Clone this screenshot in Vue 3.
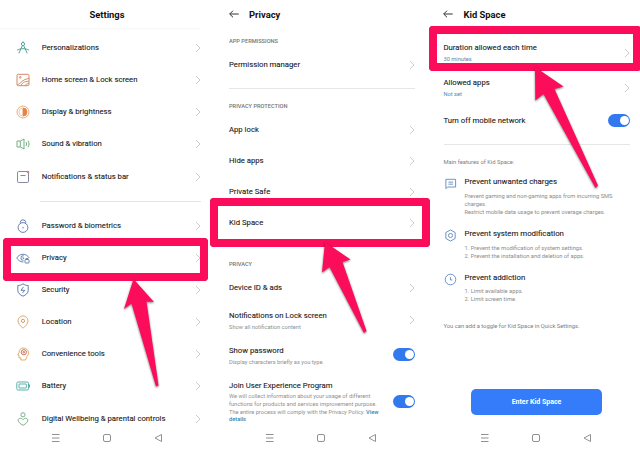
<script setup>
const settings = [
  { icon: 'compass', text: 'Personalizations' },
  { icon: 'home', text: 'Home screen & Lock screen' },
  { icon: 'display', text: 'Display & brightness' },
  { icon: 'sound', text: 'Sound & vibration' },
  { icon: 'notify', text: 'Notifications & status bar' },
  { divider: true },
  { icon: 'lock', text: 'Password & biometrics' },
  { icon: 'eye', text: 'Privacy' },
  { icon: 'shield', text: 'Security' },
  { icon: 'pin', text: 'Location' },
  { icon: 'head', text: 'Convenience tools' },
  { icon: 'battery', text: 'Battery' },
  { icon: 'heart', text: 'Digital Wellbeing & parental controls' },
]
const protection = ['App lock', 'Hide apps', 'Private Safe', 'Kid Space']
const features = [
  {
    icon: 'chat',
    title: 'Prevent unwanted charges',
    lines: ['Prevent gaming and non-gaming apps from incurring SMS', 'charges.', 'Restrict mobile data usage to prevent overage charges.'],
  },
  {
    icon: 'hex',
    title: 'Prevent system modification',
    lines: ['1. Prevent the modification of system settings.', '2. Prevent the installation and deletion of apps.'],
  },
  { icon: 'clock', title: 'Prevent addiction', lines: ['1. Limit available apps.', '2. Limit screen time.'] },
]
const icons = {
  compass: '<g stroke="#3f9c8d"><circle cx="7" cy="3" r="1.6"/><path d="M6.3 4.6 2.8 12.4M7.7 4.6l3.5 7.8M1 9.2c3.5-2 8.500-2 12 0M7 .4v1"/></g>',
  home: '<g stroke="#cf7c54"><rect x="1" y="1.300" width="12" height="11.400" rx="1.200"/><path d="M1.500 11.500C5 11 5.500 6.500 12.800 5.500M5 12.500c1-2.500 3-4 7.800-4.300M9 12.500c.7-1.200 2-1.800 3.800-1.900"/><circle cx="4.200" cy="4.400" r=".8"/></g>',
  display: '<circle cx="7" cy="7" r="6" stroke="#e7a765"/><path d="M7 3a4 4 0 0 1 0 8z" fill="#e5854e" stroke="#e5854e"/><path d="M7 3a4 4 0 0 0 0 8" stroke="#f0c495"/>',
  sound: '<g stroke="#63a774"><path d="M1 4h3.300v6H1zM4.300 4 8 2v10L4.300 10M10 5c.8 1 .8 3 0 4M12 3.700c1.400 2 1.400 4.600 0 6.600"/></g>',
  notify: '<rect x="1.500" y="1.500" width="11" height="11" rx="1.300" stroke="#747e99"/><path d="M4.500 5.500h5" stroke="#747e99"/><circle cx="12" cy="2" r="1.300" fill="#d98080" stroke="none"/>',
  lock: '<g stroke="#5674aa"><circle cx="7" cy="8.500" r="4.900"/><path d="M4.300 4.600V3.500a2.700 2.700 0 0 1 5.400 0v1.100M7 7.800v1.700"/></g>',
  eye: '<g stroke="#5878ad"><path d="M7.500 11C4 11 1.800 8.800.8 7c2.700-5 9.700-5 12.400 0M7.800 4.800a2.300 2.300 0 1 0-.3 4.500M7 6.200v1.200h1.200"/><rect x="9" y="8.500" width="4" height="3.500" rx=".7"/><path d="M10 8.500v-1h2v1"/></g>',
  shield: '<g stroke="#50719f"><path d="M7 .8c1.700 1.200 3.300 1.700 5.200 1.700v5c0 2.700-2.500 4.500-5.200 5.700C4.300 12 1.800 10.200 1.800 7.500v-5C3.700 2.500 5.300 2 7 .8z"/><path d="M7.500 3.800 5 7.300h3.800L6.400 10" /></g>',
  pin: '<g stroke="#d5a66b"><path d="M7 13.200C4.500 11 2 8.800 2 5.900a5 5 0 0 1 10 0c0 2.900-2.500 5.100-5 7.300z"/><circle cx="7" cy="5.900" r="1.600" stroke="#cc946f"/></g>',
  head: '<path d="M4.800 13v-2.200H3V8.500L1.700 8 3 5.600C3 2.500 5 1 7.500 1s5 2 5 4.800c0 2-1.500 3-1.800 4.400L9.500 13z" stroke="#dea557"/><circle cx="7.800" cy="5.200" r="2.600" stroke="#be6350"/><circle cx="7.800" cy="5.200" r=".8" stroke="#be6350"/>',
  battery: '<g stroke="#47aaa2"><rect x=".8" y="3" width="11.700" height="8" rx="1.300"/><rect x="3" y="5" width="7.300" height="4" rx=".4"/><path d="M13.500 5.500v3"/></g>',
  heart: '<g stroke="#6ca77e"><circle cx="7" cy="2.800" r="2.100"/><path d="M7 13.300C4 11.700 2.200 10 2.200 8.200c0-2.200 3.200-2.700 4.800-.5 1.600-2.200 4.800-1.700 4.800.5 0 1.800-1.800 3.500-4.800 5.100z"/></g>',
  chat: '<g stroke="#4f7fba"><path d="M2 12.500v-10h10.500v8.300H4z"/><path d="M4.800 5.500h5M4.800 7.700h5"/></g>',
  hex: '<g stroke="#4f7fba"><path d="M7 1 12 3.800v6.400L7 13l-5-2.800V3.800z"/><circle cx="7" cy="7" r="2.200"/></g>',
  clock: '<g stroke="#4f7fba"><circle cx="7" cy="7" r="5.700"/><path d="M7 4.500v3h2"/></g>',
}
</script>

<template>
  <main class="board">
    <section class="phone first">
      <header class="head center">Settings</header>
      <div class="list">
        <template v-for="(s, i) in settings" :key="i">
          <div v-if="s.divider" class="gap"><i></i></div>
          <div v-else class="row">
            <svg class="icon" viewBox="0 0 14 14" v-html="icons[s.icon]"></svg>
            <span class="label">{{ s.text }}</span>
            <svg class="chev" viewBox="0 0 6 10"><path d="M1 1l4 4-4 4" /></svg>
          </div>
        </template>
      </div>
    </section>

    <section class="phone second">
      <header class="head">
        <svg class="back" viewBox="0 0 10 8"><path d="M9.700 4H.8M4 .7.700 4 4 7.300" /></svg>Privacy
      </header>
      <h3 class="cap cap-a">APP PERMISSIONS</h3>
      <div class="row perm">
        <span class="label">Permission manager</span>
        <svg class="chev" viewBox="0 0 6 10"><path d="M1 1l4 4-4 4" /></svg>
      </div>
      <hr />
      <h3 class="cap cap-b">PRIVACY PROTECTION</h3>
      <div v-for="p in protection" :key="p" class="row prot">
        <span class="label">{{ p }}</span>
        <svg class="chev" viewBox="0 0 6 10"><path d="M1 1l4 4-4 4" /></svg>
      </div>
      <h3 class="cap cap-c">PRIVACY</h3>
      <div class="row dev">
        <span class="label">Device ID &amp; ads</span>
        <svg class="chev" viewBox="0 0 6 10"><path d="M1 1l4 4-4 4" /></svg>
      </div>
      <div class="row two">
        <div class="stack"><span class="label">Notifications on Lock screen</span><small>Show all notification content</small></div>
        <svg class="chev" viewBox="0 0 6 10"><path d="M1 1l4 4-4 4" /></svg>
      </div>
      <div class="row two">
        <div class="stack"><span class="label">Show password</span><small>Display characters briefly as you type.</small></div>
        <span class="toggle"></span>
      </div>
      <div class="row join">
        <div class="stack">
          <span class="label">Join User Experience Program</span>
          <small>We will collect information about your usage of different<br />functions for products and services improvement purpose.<br />The entire process will comply with the Privacy Policy. <b>View<br />details</b></small>
        </div>
        <span class="toggle"></span>
      </div>
    </section>

    <section class="phone third">
      <header class="head">
        <svg class="back" viewBox="0 0 10 8"><path d="M9.700 4H.8M4 .7.700 4 4 7.300" /></svg>Kid Space
      </header>
      <div class="row opt">
        <div class="stack"><span class="label">Duration allowed each time</span><small class="blue">30 minutes</small></div>
        <svg class="chev" viewBox="0 0 6 10"><path d="M1 1l4 4-4 4" /></svg>
      </div>
      <div class="row opt">
        <div class="stack"><span class="label">Allowed apps</span><small class="blue">Not set</small></div>
        <svg class="chev" viewBox="0 0 6 10"><path d="M1 1l4 4-4 4" /></svg>
      </div>
      <div class="row net">
        <span class="label">Turn off mobile network</span>
        <span class="toggle"></span>
      </div>
      <hr />
      <p class="note intro">Main features of Kid Space:</p>
      <article v-for="f in features" :key="f.icon" class="feature">
        <svg class="icon" viewBox="0 0 14 14" v-html="icons[f.icon]"></svg>
        <div>
          <h4>{{ f.title }}</h4>
          <p v-for="l in f.lines" :key="l">{{ l }}</p>
        </div>
      </article>
      <p class="note tip">You can add a toggle for Kid Space in Quick Settings.</p>
      <button class="enter">Enter Kid Space</button>
    </section>

    <nav v-for="n in 3" :key="n" class="nav">
      <svg viewBox="0 0 112 10">
        <path d="M1 1.500h7.500M1 5h7.500M1 8.500h7.500" />
        <rect x="52.500" y="1.500" width="7" height="7" rx="1.500" />
        <path d="M110.500 1.500v7L104 5z" />
      </svg>
    </nav>

    <svg class="marks" viewBox="0 0 640 451">
      <g class="frames">
        <rect x="7" y="242" width="197" height="35" />
        <rect x="214" y="202" width="212" height="41" />
        <rect x="433" y="30" width="204" height="37" />
      </g>
      <g class="arrows">
        <path d="M133.500 279 154 302l-7.500-.5L158.500 385.500l-2.500 1L131.500 303.500 124 309z" />
        <path d="M325 242 350.500 259.500l-8 2.500L366.500 331l-2.500 2L329.500 267 322 272.500z" />
        <path d="M535 67 563.500 86.500l-9 2.500L598 185.500l-2.500 2.500L543.500 94 535.300 100.500z" />
      </g>
    </svg>
  </main>
</template>

<style>
body { margin: 0; background: #fff; }
</style>

<style scoped>
* { box-sizing: border-box; }
.board {
  position: relative;
  display: grid;
  grid-template-columns: 210px 215px 215px;
  grid-template-rows: 426px 25px;
  width: 640px;
  height: 451px;
  overflow: hidden;
  background: #fff;
  color: #1c1c1c;
  font-family: Roboto, "Liberation Sans", sans-serif;
}
.phone { display: flex; flex-direction: column; min-width: 0; height: 426px; }
.first { padding-right: 9px; }
.second { padding: 0 10px 0 19px; }
.third { padding: 0 10px 0 18.500px; }
.head {
  display: flex;
  flex: none;
  align-items: center;
  height: 28px;
  font-size: 9.400px;
  font-weight: 700;
  color: #111;
}
.center { justify-content: center; height: 29px; padding-left: 13px; border-bottom: 1px solid #f7f7f7; }
.back { width: 10px; height: 8px; margin: 0 10.500px 0 -.5px; fill: none; stroke: #333; stroke-width: 1; }
.list { padding: 2.900px 0 0 16px; }
.row { display: flex; flex: none; align-items: center; justify-content: space-between; }
.list .row { height: 32.150px; }
.icon { flex: none; width: 14px; height: 14px; fill: none; stroke-width: .9; }
.list .icon { margin-right: 11.700px; }
.list .label { flex: 1; }
.label { font-size: 7.730px; line-height: 10px; font-weight: 400; white-space: nowrap; color: #1c1c1c; -webkit-text-stroke: .1px #1c1c1c; }
.chev { flex: none; width: 6px; height: 10px; fill: none; stroke: #c6c6c6; stroke-width: .9; }
.gap { display: flex; align-items: center; height: 17px; padding-left: 24px; }
.gap i { flex: 1; height: 1px; background: #e4e4e4; }
hr { flex: none; width: 100%; height: 1px; margin: 0; border: 0; background: #e6e6e6; }
.cap { flex: none; margin: 0; font-size: 5.650px; font-weight: 500; line-height: 10px; color: #757575; }
.cap-a { height: 21px; padding-top: 8px; }
.perm { height: 32px; }
.second hr { margin-top: 7px; }
.cap-b { height: 25.300px; padding-top: 12px; }
.prot { height: 31.100px; }
.cap-c { height: 34.500px; padding-top: 20px; }
.dev { height: 29px; }
.stack { display: flex; flex-direction: column; }
small { display: block; font-size: 5.700px; line-height: 7.600px; color: #8f8f8f; white-space: nowrap; }
small b { font-weight: 500; color: #3586b4; }
small.blue { color: #5586b5; }
.two { height: 35px; }
.two small { margin-top: 2.500px; }
.two .stack { padding-top: 3px; }
.join { height: 48px; margin-top: 5px; }
.join .stack { padding-top: 3px; }
.join small { margin-top: 2px; }
.toggle {
  display: flex;
  flex: none;
  justify-content: flex-end;
  align-items: center;
  width: 22px;
  height: 13px;
  padding-right: 1.500px;
  border-radius: 7px;
  background: #3279ee;
}
.toggle::after { content: ""; width: 9px; height: 9px; border-radius: 50%; background: #fff; }
.opt { height: 35px; }
.third .head + .opt { margin-top: 7px; }
.opt .stack { padding-top: 2px; }
.opt small { margin-top: 2.500px; }
.net { height: 31px; }
.third hr { margin-top: 8px; }
.note { flex: none; margin: 0; font-size: 5.800px; line-height: 8px; color: #808080; white-space: nowrap; }
.intro { height: 32px; padding-top: 13px; }
.feature { display: flex; flex: none; gap: 7.500px; }
.feature:nth-of-type(1) { height: 52px; }
.feature:nth-of-type(2) { height: 43.500px; }
.feature:nth-of-type(3) { height: 43.500px; }
.feature .icon { width: 13px; height: 13px; margin-left: .5px; }
.feature h4 { margin: 0 0 4.500px; font-size: 7.850px; line-height: 10px; font-weight: 400; color: #1c1c1c; -webkit-text-stroke: .1px #1c1c1c; }
.feature p { margin: 0; font-size: 5.780px; line-height: 8.200px; color: #8c8c8c; white-space: nowrap; }
.tip { padding-top: 6px; }
.enter {
  flex: none;
  width: 131px;
  height: 26px;
  margin: auto 0 11px 27.500px;
  padding: 0;
  border: 0;
  border-radius: 5px;
  background: #347cfa;
  color: #fff;
  font: 700 7px/26px Roboto, sans-serif;
}
.nav { display: flex; align-items: center; padding: 0 0 1px 51px; }
.nav + .nav { padding-left: 55px; }
.nav svg { width: 112px; height: 10px; fill: none; stroke: #858585; stroke-width: .9; }
.marks { position: absolute; inset: 0; width: 640px; height: 451px; }
.frames rect { fill: none; stroke: #fb0d5c; stroke-width: 8; stroke-linejoin: round; filter: drop-shadow(0 0 .5px #9b174b); }
.arrows path { fill: #fb0d5c; filter: drop-shadow(0 1px 1px #0008); }
</style>
